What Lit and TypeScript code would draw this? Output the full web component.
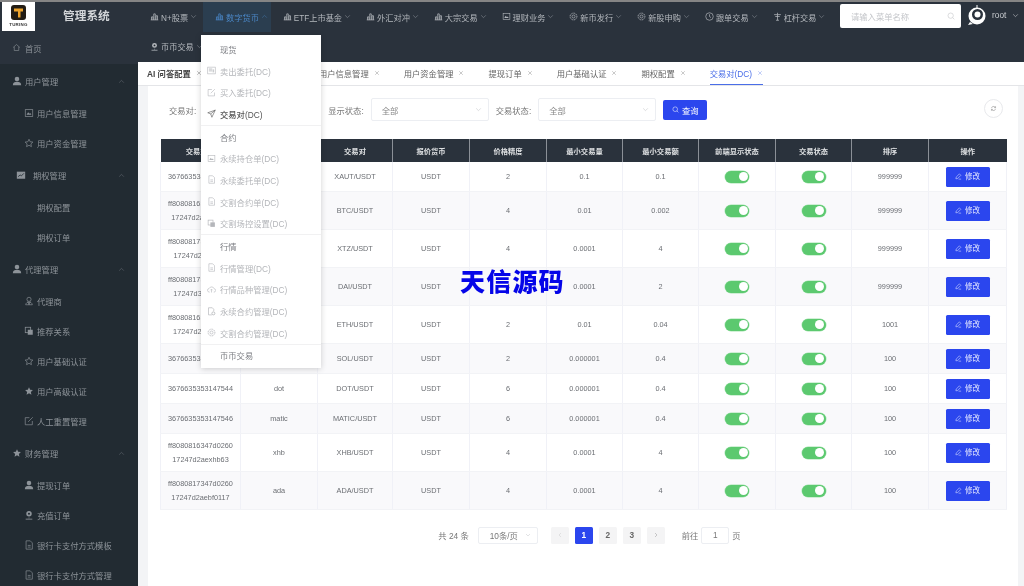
import { LitElement, html, css, svg } from 'lit';
import { customElement } from 'lit/decorators.js';

const paths: Record<string, unknown> = {
  home: svg`<path d="M3 12 12 4l9 8M6 10v10h12V10" fill="none" stroke="currentColor" stroke-width="1.6"/>`,
  bars: svg`<path d="M4 21v-8h4v8M10 21V5h4v16M16 21V10h4v11M2 21h20" fill="none" stroke="currentColor" stroke-width="2"/>`,
  user: svg`<circle cx="12" cy="7" r="5.5" fill="currentColor"/><path d="M2 22c0-6 4-8 10-8s10 2 10 8z" fill="currentColor"/>`,
  pic: svg`<rect x="3" y="4" width="18" height="16" fill="none" stroke="currentColor" stroke-width="1.6"/><path d="M6 16l4-6 3 4 2-2 3 4z" fill="currentColor"/>`,
  star: svg`<path d="M12 3l2.8 6 6.5.8-4.8 4.4 1.3 6.5L12 17.500l-5.800 3.200 1.300-6.500L2.700 9.800 9.200 9z" fill="none" stroke="currentColor" stroke-width="1.6"/>`,
  starf: svg`<path d="M12 3l2.800 6 6.500.8-4.800 4.400 1.300 6.500L12 17.500l-5.800 3.200 1.300-6.500L2.700 9.800 9.200 9z" fill="currentColor"/>`,
  chart: svg`<rect x="2" y="4" width="20" height="17" fill="currentColor"/><path d="M5 16l5-4 3 2 6-6" fill="none" stroke="#222b32" stroke-width="2"/>`,
  agent: svg`<circle cx="12" cy="8" r="5" fill="none" stroke="currentColor" stroke-width="1.600"/><path d="M4 21c1-5 4-6 8-6s7 1 8 6zM9 13l3 8 3-8" fill="none" stroke="currentColor" stroke-width="1.600"/>`,
  copy: svg`<rect x="3" y="3" width="13" height="13" fill="none" stroke="currentColor" stroke-width="1.800"/><rect x="9" y="9" width="12" height="12" fill="currentColor"/>`,
  edit: svg`<path d="M20 12v9H3V4h10M10 14 21 3" fill="none" stroke="currentColor" stroke-width="1.600"/>`,
  pin: svg`<circle cx="12" cy="9" r="6.500" fill="currentColor"/><circle cx="12" cy="9" r="2.500" fill="#222b32"/><path d="M12 18v2M4 22h16" stroke="currentColor" stroke-width="2"/>`,
  file: svg`<path d="M5 2h10l5 5v15H5zM9 13h7M9 17h7" fill="none" stroke="currentColor" stroke-width="1.600"/>`,
  filepic: svg`<rect x="2" y="3" width="20" height="18" fill="none" stroke="currentColor" stroke-width="1.600"/><rect x="5" y="6" width="9" height="9" fill="currentColor" opacity=".5"/><rect x="15" y="9" width="4" height="8" fill="currentColor" opacity=".7"/>`,
  send: svg`<path d="M22 3 2 10l8 3 3 9zM22 3 10 13" fill="none" stroke="currentColor" stroke-width="1.600"/>`,
  cloud: svg`<path d="M7 19a5 5 0 0 1-1-10 7 7 0 0 1 13 1 4.500 4.500 0 0 1-1 9M12 20v-8M9 14l3-3 3 3" fill="none" stroke="currentColor" stroke-width="1.600"/>`,
  filegear: svg`<path d="M13 21H4V2h10l4 4v5" fill="none" stroke="currentColor" stroke-width="1.800"/><circle cx="17" cy="17" r="4" fill="none" stroke="currentColor" stroke-width="2.200"/>`,
  gear: svg`<circle cx="12" cy="12" r="4" fill="none" stroke="currentColor" stroke-width="1.800"/><circle cx="12" cy="12" r="9" fill="none" stroke="currentColor" stroke-width="2.400" stroke-dasharray="3 1.800"/>`,
  clock: svg`<circle cx="12" cy="12" r="10" fill="none" stroke="currentColor" stroke-width="1.800"/><path d="M12 6v6l4 3" fill="none" stroke="currentColor" stroke-width="1.800"/>`,
  lever: svg`<path d="M3 7h18M6 12h12M12 7v15M8 22h8M12 2v5" fill="none" stroke="currentColor" stroke-width="2"/>`,
  search: svg`<circle cx="11" cy="11" r="8" fill="none" stroke="currentColor" stroke-width="1.800"/><path d="m17 17 5 5" stroke="currentColor" stroke-width="1.800"/>`,
  refresh: svg`<path d="M5 11a7 7 0 0 1 12-4l2 2M19 13a7 7 0 0 1-12 4l-2-2M19 4v5h-5M5 20v-5h5" fill="none" stroke="currentColor" stroke-width="1.800"/>`,
  pen: svg`<path d="M15 3l5 5L9 19l-6 1 1-6zM12 21h9" fill="none" stroke="currentColor" stroke-width="1.800"/>`,
  up: svg`<path d="m4 16 8-8 8 8" fill="none" stroke="currentColor" stroke-width="2"/>`,
  down: svg`<path d="m4 8 8 8 8-8" fill="none" stroke="currentColor" stroke-width="2"/>`,
  left: svg`<path d="m16 4-8 8 8 8" fill="none" stroke="currentColor" stroke-width="2"/>`,
  right: svg`<path d="m8 4 8 8-8 8" fill="none" stroke="currentColor" stroke-width="2"/>`,
  close: svg`<path d="m5 5 14 14M19 5 5 19" fill="none" stroke="currentColor" stroke-width="2"/>`,
};

const icon = (name: string, cls = '') =>
  html`<svg class="ic ${cls}" viewBox="0 0 24 24">${paths[name]}</svg>`;

const NAV = [
  ['bars', 'N+股票'], ['bars', '数字货币'], ['bars', 'ETF上市基金'], ['bars', '外汇对冲'],
  ['bars', '大宗交易'], ['pic', '理财业务'], ['gear', '新币发行'], ['gear', '新股申购'],
  ['clock', '跟单交易'], ['lever', '杠杆交易'], ['pin', '币币交易'],
];

const SIDE = [
  { icon: 'user', label: '用户管理', kids: [['pic', '用户信息管理'], ['star', '用户资金管理']] },
  { icon: 'chart', label: '期权管理', inset: true, kids: [['', '期权配置'], ['', '期权订单']] },
  { icon: 'user', label: '代理管理', kids: [['agent', '代理商'], ['copy', '推荐关系'], ['star', '用户基础认证'], ['starf', '用户高级认证'], ['edit', '人工重置管理']] },
  { icon: 'starf', label: '财务管理', kids: [['user', '提现订单'], ['pin', '充值订单'], ['file', '银行卡支付方式模板'], ['file', '银行卡支付方式管理']] },
];

const DROP = [
  { title: '现货', items: [['filepic', '卖出委托(DC)'], ['edit', '买入委托(DC)'], ['send', '交易对(DC)']] },
  { title: '合约', items: [['pic', '永续持仓单(DC)'], ['file', '永续委托单(DC)'], ['file', '交割合约单(DC)'], ['copy', '交割场控设置(DC)']] },
  { title: '行情', items: [['file', '行情管理(DC)'], ['cloud', '行情品种管理(DC)'], ['filegear', '永续合约管理(DC)'], ['gear', '交割合约管理(DC)']] },
  { title: '币币交易', items: [] },
];

const TABS = ['AI 问答配置', '合约交易对配置', '用户信息管理', '用户资金管理', '提现订单', '用户基础认证', '期权配置', '交易对(DC)'];

const HEAD = ['交易对ID', '币种', '交易对', '报价货币', '价格精度', '最小交易量', '最小交易额', '前端显示状态', '交易状态', '排序', '操作'];

const ROWS = [
  ['3676635353147541', 'xaut', 'XAUT/USDT', '2', '0.1', '0.1', '999999'],
  ['ff8080816347d0260\n17247d2aebtc001', 'btc', 'BTC/USDT', '4', '0.01', '0.002', '999999'],
  ['ff8080817347d0260\n17247d2aextz02', 'xtz', 'XTZ/USDT', '4', '0.0001', '4', '999999'],
  ['ff8080817347d0260\n17247d3aedai03', 'dai', 'DAI/USDT', '4', '0.0001', '2', '999999'],
  ['ff8080816347d0260\n17247d2aeeth04', 'eth', 'ETH/USDT', '2', '0.01', '0.04', '1001'],
  ['3676635353147543', 'sol', 'SOL/USDT', '2', '0.000001', '0.4', '100'],
  ['3676635353147544', 'dot', 'DOT/USDT', '6', '0.000001', '0.4', '100'],
  ['3676635353147546', 'matic', 'MATIC/USDT', '6', '0.000001', '0.4', '100'],
  ['ff8080816347d0260\n17247d2aexhb63', 'xhb', 'XHB/USDT', '4', '0.0001', '4', '100'],
  ['ff8080817347d0260\n17247d2aebf0117', 'ada', 'ADA/USDT', '4', '0.0001', '4', '100'],
];

@customElement('app-root')
export class AppRoot extends LitElement {
  static styles = css`
    :host {
      display: block;
      position: relative;
      width: 1024px;
      height: 586px;
      overflow: hidden;
      font-family: "Liberation Sans", "Noto Sans CJK SC", sans-serif;
      font-size: 8.3px;
      filter: blur(0.35px);
    }
    * { box-sizing: border-box; }
    .ic { width: 9px; height: 9px; flex: none; display: block; }

    .shell {
      display: grid;
      grid-template-columns: 138px 1fr;
      height: 586px;
      border-top: 2px solid #858585;
      background: #222b32;
    }

    /* sidebar */
    .side { overflow: hidden; color: #8d9399; }
    .top-left { background: #2a323c; height: 62px; }
    .brand { display: flex; align-items: flex-start; height: 29px; }
    .logo {
      width: 33px;
      height: 30px;
      background: #fff;
      margin: -1px 0 0 2px;
      display: flex;
      flex-direction: column;
      align-items: center;
      padding-top: 4px;
    }
    .logo-mark { width: 15px; height: 15px; display: block; }
    .logo-name { font: bold 4.4px/9px "Liberation Sans", sans-serif; color: #333; letter-spacing: .3px; }
    .brand-title { margin: 5px 0 0 28px; font-size: 11.7px; line-height: 18px; font-weight: 700; color: #d3d6d9; }
    .home { display: flex; align-items: center; gap: 4px; height: 33px; padding-left: 12px; }
    .group { display: flex; align-items: center; gap: 3px; height: 34px; padding: 0 13px 0 12px; }
    .group.inset { padding-left: 16px; gap: 7px; }
    .group.inset .ic { width: 7px; height: 7px; }
    .group .ic:first-child { width: 10px; height: 10px; }
    .group .chev { margin-left: auto; width: 7px; height: 7px; opacity: .6; }
    .sub { display: flex; align-items: center; gap: 3px; height: 30px; padding-left: 24px; }
    .sub .ic { width: 10px; height: 10px; }
    .sub .blank { width: 10px; }

    /* header */
    .main { display: flex; flex-direction: column; min-width: 0; background: #f3f4f6; }
    .head { display: flex; align-items: flex-start; background: #2a323c; height: 60px; color: #b4b8bd; }
    .nav { display: flex; flex-wrap: wrap; width: 702px; font-size: 8.2px; }
    .nav-item { display: flex; align-items: center; height: 29.500px; padding: 0 3px 0 12px; gap: 2px; }
    .nav-item:first-child { padding-right: 6px; }
    .nav-item .chev { width: 7px; height: 7px; opacity: .7; }
    .nav-item.active { background: #2b3e50; color: #4a86c5; }
    .search {
      display: flex;
      align-items: center;
      justify-content: space-between;
      width: 121px;
      height: 24px;
      margin-top: 2px;
      padding: 0 6px 0 11px;
      background: #fff;
      border-radius: 2px;
      color: #c4c6ca;
    }
    .search .ic { width: 8px; height: 8px; }
    .avatar { width: 20px; height: 22px; margin: 3px 0 0 6px; flex: none; display: block; }
    .user { display: flex; align-items: center; gap: 6px; height: 26px; margin-left: 5px; color: #c9ccd0; }
    .user .ic { width: 7px; height: 7px; }

    /* tabs */
    .tabs {
      display: flex;
      height: 24px;
      padding-left: 9px;
      gap: 24px;
      background: #fff;
      border-bottom: 1px solid #e4e5e8;
      color: #666;
    }
    .tab { display: flex; align-items: center; gap: 5px; height: 23px; padding-bottom: 2px; white-space: nowrap; }
    .tab .ic { width: 6px; height: 6px; opacity: .7; }
    .tab.first { font-weight: 700; color: #444; }
    .tab.active { color: #4a6ee8; box-shadow: inset 0 -1px 0 #4a6ee8; }

    /* content */
    .body { flex: 1; padding: 0 6px 0 10px; min-height: 0; }
    .card { height: 100%; padding: 12px 12px 0; background: #fff; }
    .filters { display: flex; align-items: center; height: 23px; color: #777; gap: 7px; padding-left: 9px; }
    .select {
      display: flex;
      align-items: center;
      justify-content: space-between;
      width: 118px;
      height: 23px;
      padding: 0 6px 0 10px;
      border: 1px solid #eceef2;
      border-radius: 2px;
      color: #888;
    }
    .select .ic { width: 7px; height: 7px; color: #c4c6ca; }
    .query {
      display: flex;
      align-items: center;
      justify-content: center;
      gap: 3px;
      width: 44px;
      height: 20px;
      border-radius: 2px;
      background: #2b46ee;
      color: #fff;
    }
    .query .ic { width: 7px; height: 7px; }
    .reload {
      display: flex;
      align-items: center;
      justify-content: center;
      width: 19px;
      height: 19px;
      margin: -3px 3px 0 auto;
      border: 1px solid #e8e9ec;
      border-radius: 50%;
      color: #888;
    }
    .reload .ic { width: 7px; height: 7px; }

    table { width: 846px; margin-top: 18px; border-collapse: collapse; table-layout: fixed; font-size: 7.3px; }
    th {
      height: 23px;
      padding: 0;
      background: #2a323c;
      color: #dfe1e3;
      font-weight: 700;
      border-left: 1px solid #8b9097;
    }
    th:first-child { border-left: 0; }
    td {
      padding: 4.500px 2px;
      line-height: 14px;
      text-align: center;
      color: #6b6e73;
      border-left: 1px solid #f0f1f7;
      border-bottom: 1px solid #f2f3f6;
      white-space: pre-line;
    }
    td:last-child { border-right: 1px solid #f0f1f7; }
    tbody tr:nth-child(even) td { background: #f9f9fb; }
    .c1 { width: 80px; } .c2 { width: 77px; } .c3 { width: 75px; } .c4 { width: 77px; }
    .c5 { width: 77px; } .c6 { width: 76px; } .c7 { width: 76px; } .c8 { width: 77px; }
    .c9 { width: 76px; } .c10 { width: 77px; } .c11 { width: 78px; }

    .sw {
      display: block;
      position: relative;
      width: 24px;
      height: 12px;
      margin: 0 auto;
      border-radius: 6px;
      background: #5cc96f;
      box-shadow: 0 0 0 .5px #a5e3b0;
    }
    .sw::after {
      content: "";
      position: absolute;
      right: 1.500px;
      top: 1.500px;
      width: 9px;
      height: 9px;
      border-radius: 50%;
      background: #fff;
    }
    .edit {
      display: flex;
      align-items: center;
      justify-content: center;
      gap: 3px;
      width: 44px;
      height: 20px;
      margin: 0 auto;
      border-radius: 1.500px;
      background: #2b46ee;
      color: #e8ebff;
      font-size: 7.500px;
    }
    .edit .ic { width: 7px; height: 7px; }

    /* pagination */
    .pager {
      display: flex;
      align-items: center;
      justify-content: center;
      height: 18px;
      margin-top: 16px;
      padding-left: 13px;
      color: #777;
    }
    .size {
      display: flex;
      align-items: center;
      justify-content: space-between;
      width: 60px;
      height: 17px;
      margin: 0 13px 0 9px;
      padding: 0 6px 0 11px;
      border: 1px solid #eceef2;
      border-radius: 2px;
    }
    .size .ic { width: 6px; height: 6px; color: #c4c6ca; }
    .pg {
      display: flex;
      align-items: center;
      justify-content: center;
      width: 18px;
      height: 17px;
      margin-right: 6px;
      background: #f4f4f5;
      font-weight: 700;
      border-radius: 1.500px;
      color: #666;
    }
    .pg .ic { width: 6px; height: 6px; color: #999; }
    .pg.dim .ic { color: #ccc; }
    .pg.on { background: #2b46ee; color: #fff; }
    .goto { margin-left: 11px; }
    .page-in {
      display: flex;
      align-items: center;
      justify-content: center;
      width: 28px;
      height: 17px;
      margin: 0 3px;
      border: 1px solid #eceef2;
      border-radius: 2px;
    }

    /* dropdown */
    .drop {
      position: absolute;
      left: 201px;
      top: 35px;
      width: 120px;
      padding-top: 3px;
      background: #fff;
      box-shadow: 0 1px 6px rgba(0, 0, 0, .18);
      color: #b4b6ba;
    }
    .drop-group { border-bottom: 1px solid #f1f1f2; }
    .drop-group:last-child { border-bottom: 0; padding-bottom: 2px; }
    .drop-row { display: flex; align-items: center; gap: 4px; height: 21.700px; padding-left: 6px; white-space: nowrap; }
    .drop-row.heading { padding-left: 19px; color: #7c7e83; }
    .drop-row.cur { color: #555; font-weight: 500; }

    .mark {
      position: absolute;
      left: 460px;
      top: 265px;
      font-size: 25px;
      letter-spacing: 1.200px;
      line-height: 34px;
      font-weight: 900;
      color: #0505e8;
    }
  `;

  renderSide() {
    return html`<aside class="side">
      <div class="top-left">
        <div class="brand">
          <div class="logo">
            <svg class="logo-mark" viewBox="0 0 15 15">
              <rect width="15" height="15" rx="3" fill="#221c14"/>
              <path d="M3 3.500h9v3H9.500v6h-2.500V6.500H3z" fill="#eda32c"/>
            </svg>
            <div class="logo-name">TURING</div>
          </div>
          <div class="brand-title">管理系统</div>
        </div>
        <div class="home">${icon('home')}<span>首页</span></div>
      </div>
      ${SIDE.map(g => html`
        <div class="group ${g.inset ? 'inset' : ''}">
          ${icon(g.icon)}<span>${g.label}</span>${icon('up', 'chev')}
        </div>
        ${g.kids.map(k => html`<div class="sub">
          ${k[0] ? icon(k[0]) : html`<span class="blank"></span>`}<span>${k[1]}</span>
        </div>`)}
      `)}
    </aside>`;
  }

  renderHead() {
    return html`<header class="head">
      <nav class="nav">
        ${NAV.map(n => html`<div class="nav-item ${n[1] === '数字货币' ? 'active' : ''}">
          ${icon(n[0])}<span>${n[1]}</span>${icon(n[1] === '数字货币' ? 'up' : 'down', 'chev')}
        </div>`)}
      </nav>
      <div class="search"><span>请输入菜单名称</span>${icon('search')}</div>
      <svg class="avatar" viewBox="0 0 20 22">
        <path d="M9.500 0h1v4h-1z" fill="#fff"/>
        <circle cx="10" cy="11" r="8.500" fill="#fff"/>
        <path d="M3 17l-2 3 5-1z" fill="#fff"/>
        <circle cx="10.500" cy="9.500" r="5.500" fill="#2a323c"/>
        <circle cx="10.500" cy="9.500" r="3" fill="#fff"/>
      </svg>
      <div class="user"><span>root</span>${icon('down')}</div>
    </header>`;
  }

  renderTable() {
    return html`<table>
      <thead>
        <tr>${HEAD.map((h, i) => html`<th class="c${i + 1}">${h}</th>`)}</tr>
      </thead>
      <tbody>
        ${ROWS.map(r => html`<tr>
          <td>${r[0]}</td>
          <td>${r[1]}</td>
          <td>${r[2]}</td>
          <td>USDT</td>
          <td>${r[3]}</td>
          <td>${r[4]}</td>
          <td>${r[5]}</td>
          <td><span class="sw"></span></td>
          <td><span class="sw"></span></td>
          <td>${r[6]}</td>
          <td><div class="edit">${icon('pen')}<span>修改</span></div></td>
        </tr>`)}
      </tbody>
    </table>`;
  }

  render() {
    return html`
      <div class="shell">
        ${this.renderSide()}
        <div class="main">
          ${this.renderHead()}
          <div class="tabs">
            ${TABS.map((t, i) => html`<div class="tab ${i === 0 ? 'first' : ''} ${i === TABS.length - 1 ? 'active' : ''}">
              <span>${t}</span>${icon('close')}
            </div>`)}
          </div>
          <div class="body">
            <div class="card">
              <div class="filters">
                <span>交易对:</span>
                <div class="select"><span>全部</span>${icon('down')}</div>
                <span>显示状态:</span>
                <div class="select"><span>全部</span>${icon('down')}</div>
                <span>交易状态:</span>
                <div class="select"><span>全部</span>${icon('down')}</div>
                <div class="query">${icon('search')}<span>查询</span></div>
                <div class="reload">${icon('refresh')}</div>
              </div>
              ${this.renderTable()}
              <div class="pager">
                <span>共 24 条</span>
                <div class="size"><span>10条/页</span>${icon('down')}</div>
                <div class="pg dim">${icon('left')}</div>
                <div class="pg on">1</div>
                <div class="pg">2</div>
                <div class="pg">3</div>
                <div class="pg">${icon('right')}</div>
                <span class="goto">前往</span>
                <div class="page-in">1</div>
                <span>页</span>
              </div>
            </div>
          </div>
        </div>
      </div>
      <div class="drop">
        ${DROP.map(g => html`<div class="drop-group">
          <div class="drop-row heading">${g.title}</div>
          ${g.items.map(it => html`<div class="drop-row ${it[1] === '交易对(DC)' ? 'cur' : ''}">
            ${icon(it[0])}<span>${it[1]}</span>
          </div>`)}
        </div>`)}
      </div>
      <div class="mark">天信源码</div>
    `;
  }
}
